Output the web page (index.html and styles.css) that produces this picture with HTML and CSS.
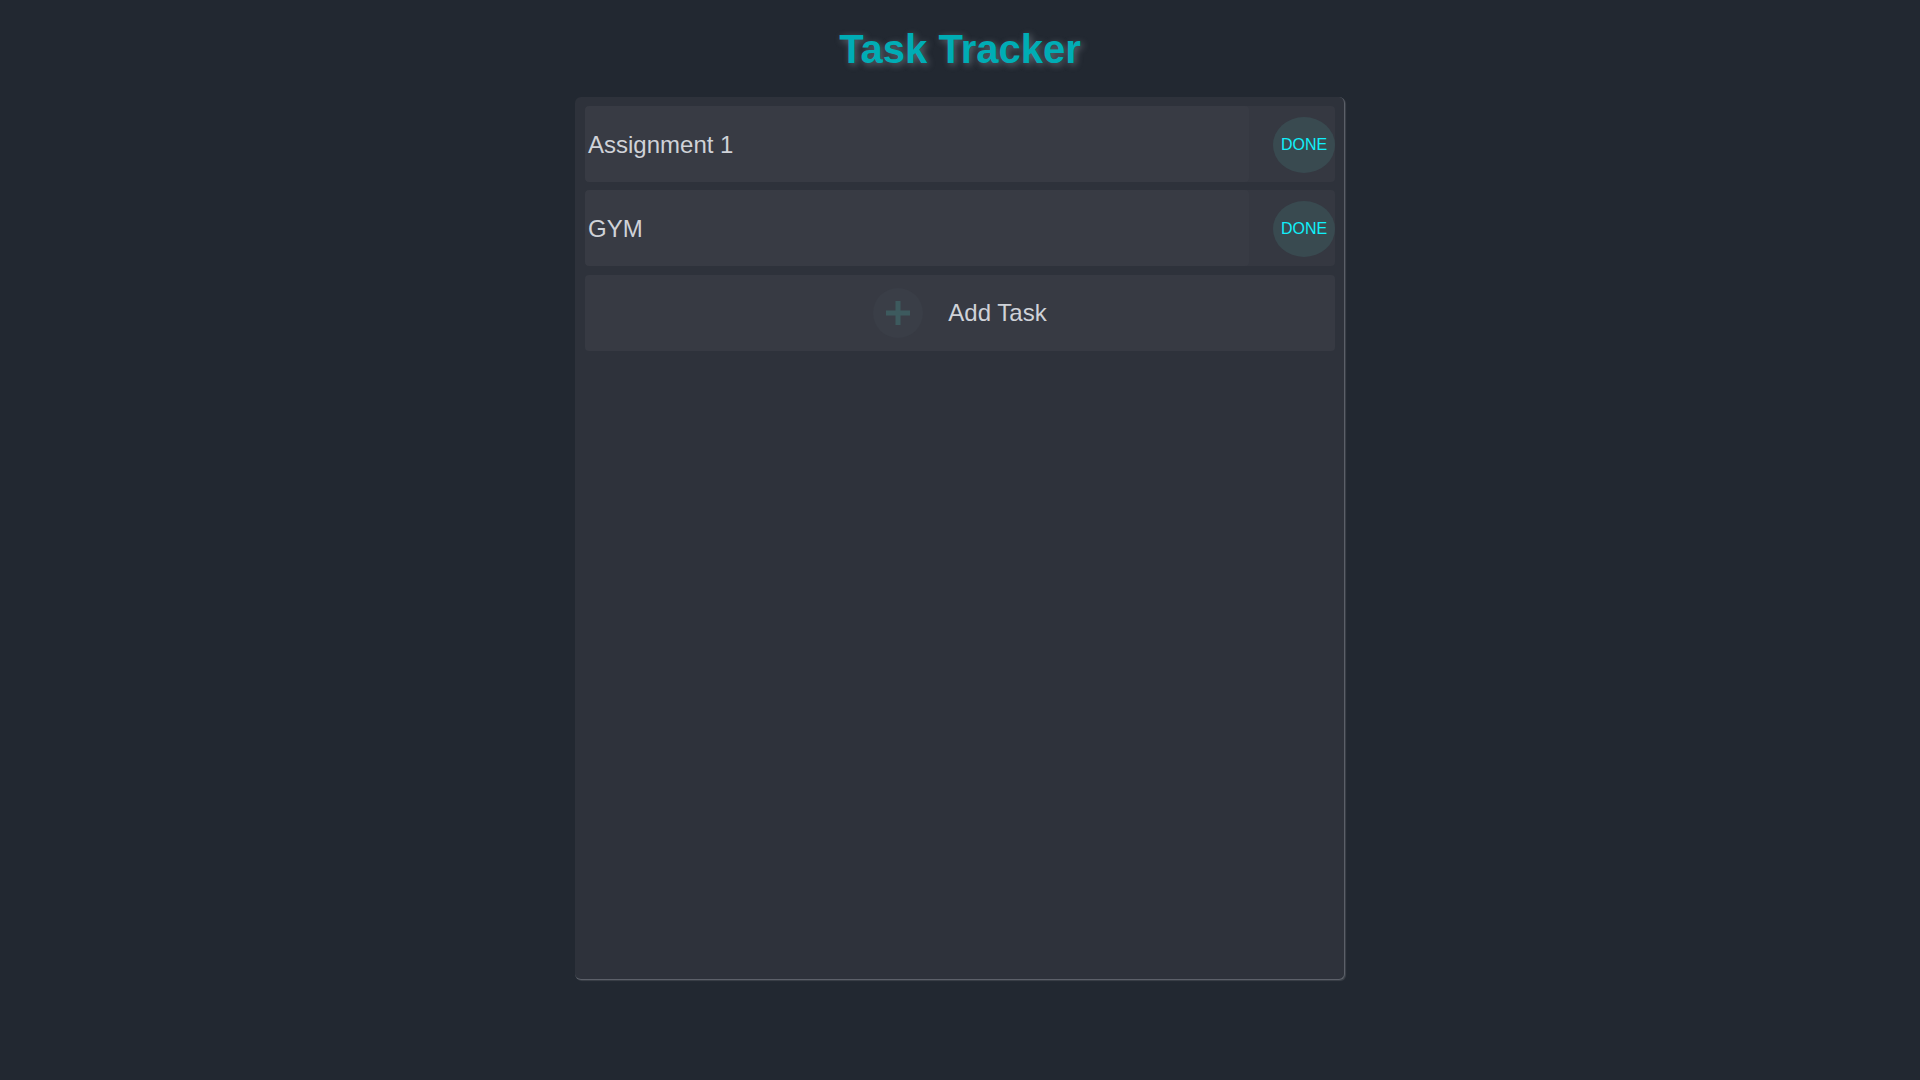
FILE: index.html
```html
<!DOCTYPE html>
<html lang="en">
<head>
<meta charset="utf-8">
<title>Task Tracker</title>
<link rel="stylesheet" href="styles.css">
</head>
<body>
  <h1 class="title">Task Tracker</h1>
  <main class="board">
    <div class="task">
      <div class="task-name">Assignment 1</div>
      <div class="task-action"><button class="done-btn">DONE</button></div>
    </div>
    <div class="task">
      <div class="task-name">GYM</div>
      <div class="task-action"><button class="done-btn">DONE</button></div>
    </div>
    <div class="add-task">
      <span class="add-icon">
        <svg width="24" height="24" viewBox="0 0 24 24"><rect x="9.5" y="0" width="5" height="24" fill="#3d5a5e"/><rect x="0" y="9.5" width="24" height="5" fill="#3d5a5e"/></svg>
      </span>
      <span class="add-label">Add Task</span>
    </div>
  </main>
</body>
</html>
```

FILE: styles.css
```css
* { box-sizing: border-box; }

body {
  margin: 0;
  background: #222831;
  font-family: "Liberation Sans", Arial, sans-serif;
  min-height: 1080px;
}

.title {
  margin: 26px 0 25px;
  text-align: center;
  font-size: 40px;
  line-height: 46px;
  font-weight: bold;
  color: #00adb5;
  text-shadow: 2px 2px 7px rgba(190, 200, 210, 0.4);
}

.board {
  width: 770px;
  height: 883px;
  margin: 0 auto;
  padding: 9px 9px 9px 10px;
  background: #2e323b;
  border-radius: 6px;
  border-right: 1px solid #5c6069;
  border-bottom: 1px solid #5c6069;
  box-shadow: 1px 1px 1px rgba(255, 255, 255, 0.12);
  display: flex;
  flex-direction: column;
  gap: 8px;
}

.task {
  height: 76px;
  display: flex;
  border-radius: 4px;
  overflow: hidden;
  background: #353841;
}

.task-name {
  flex: 1;
  display: flex;
  align-items: center;
  padding: 2px 0 0 3px;
  background: #383b44;
  border-radius: 4px;
  font-size: 24px;
  color: #cfd2d8;
}

.task-action {
  width: 86px;
  display: flex;
  align-items: center;
  justify-content: flex-end;
  padding-top: 2px;
}

.done-btn {
  width: 62px;
  height: 56px;
  border: none;
  border-radius: 50%;
  background: #394a50;
  color: #10f0fa;
  font-family: "Liberation Sans", Arial, sans-serif;
  font-size: 16px;
  padding: 0;
}

.add-task {
  height: 76px;
  margin-top: 1px;
  border-radius: 4px;
  background: #373a43;
  display: flex;
  align-items: center;
  justify-content: center;
  gap: 25px;
}

.add-icon {
  width: 50px;
  height: 50px;
  border-radius: 50%;
  background: #3a3e47;
  display: flex;
  align-items: center;
  justify-content: center;
}

.add-icon svg { display: block; }

.add-label {
  font-size: 24px;
  color: #cfd2d8;
}
```
